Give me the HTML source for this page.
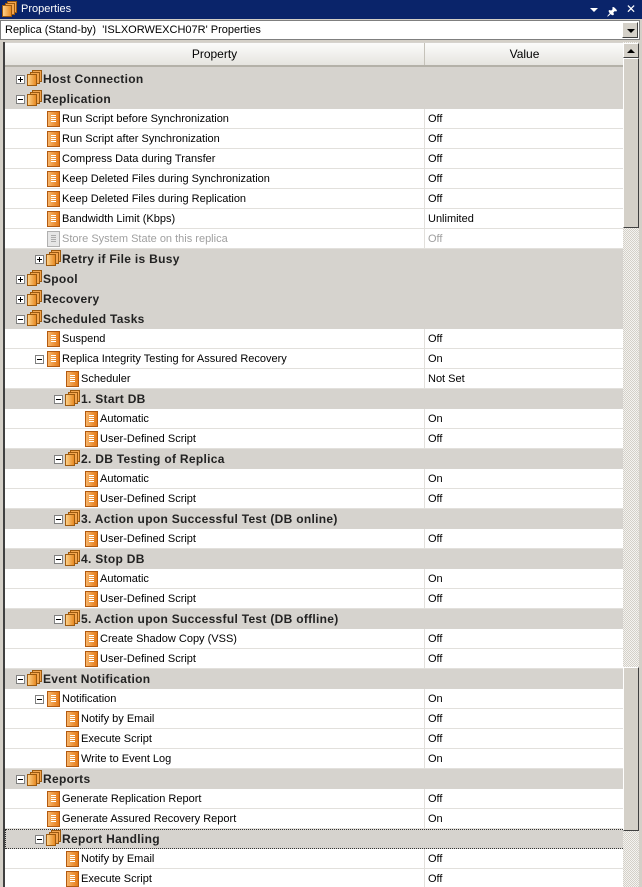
<!DOCTYPE html>
<html><head><meta charset="utf-8"><style>
*{margin:0;padding:0;box-sizing:border-box}
body{width:642px;height:887px;overflow:hidden;background:#d4d0c8;font-family:"Liberation Sans",sans-serif;font-size:11px;color:#000;position:relative}
#title{position:absolute;left:0;top:0;width:642px;height:19px;background:#0a246a;color:#fff;font-size:11px}
#title span{position:absolute;left:21px;top:3px}
#combo{position:absolute;left:0;top:20px;width:640px;height:20px;background:#fff;border:1px solid #7f7f7f}
#combo span{position:absolute;left:4px;top:3px}
#cbtn{position:absolute;right:1px;top:1px;width:16px;height:16px;background:#d4d0c8;border:1px solid #fff;border-right-color:#404040;border-bottom-color:#404040}
.dn{position:absolute;left:4px;top:6px;width:0;height:0;border-left:4px solid transparent;border-right:4px solid transparent;border-top:4px solid #000}
.up{position:absolute;left:3px;top:5px;width:0;height:0;border-left:4px solid transparent;border-right:4px solid transparent;border-bottom:4px solid #000}
#grid{position:absolute;left:3px;top:42px;width:620px;height:845px;border-left:2px solid #404040;overflow:hidden;background:#d6d3ce}
#hdr{position:absolute;left:0;top:1px;width:620px;height:24px;background:linear-gradient(#fcfcfb,#e6e4df);border-bottom:2px solid #b4b1a8}
#hdr div{position:absolute;top:0;height:22px;line-height:22px;text-align:center;font-size:12px;border-right:1px solid #c5c2b9}
.r{position:absolute;left:0;width:620px;height:20px;border-bottom:1px solid #e2e0dc;background:#fff}
.r.c{background:#d6d3ce;border-bottom:none}
.r span{position:absolute;top:4px;white-space:nowrap}
.r.c span{font-weight:bold;font-size:12px;top:3px;letter-spacing:.3px;color:#222}
.r .v{left:419px;border-left:1px solid #e2e0dc;top:0;height:20px;padding:4px 0 0 3px;width:200px}
.g1{color:#a0a0a0}
.e{position:absolute;top:6px;width:9px;height:9px;border:1px solid #808080;background:#fff}
.e:before{content:"";position:absolute;left:1px;top:3px;width:5px;height:1px;background:#000}
.e.p:after{content:"";position:absolute;left:3px;top:1px;width:1px;height:5px;background:#000}
.ic{position:absolute;top:2px;width:13px;height:16px;background:linear-gradient(90deg,#f7b56a,#e47a18);border:1px solid #b35a10}
.ic:after{content:"";position:absolute;left:3px;top:3px;width:5px;height:7px;background:repeating-linear-gradient(#fff 0 1px,transparent 1px 2px)}
.ic.gr{background:#e6e6e6;border-color:#b0b0b0}
.ic.gr:after{background:repeating-linear-gradient(#aaa 0 1px,transparent 1px 2px)}
.gp{position:absolute;top:1px;width:16px;height:17px}
.gp i{position:absolute;width:10px;height:12px;background:#f3a54e;border:1px solid #9c5a10}
.gp i:nth-child(1){left:5px;top:0}
.gp i:nth-child(2){left:2.5px;top:2px}
.gp i:nth-child(3){left:0;top:4px;background:linear-gradient(90deg,#fbd08a,#e88a22)}
.foc{outline:1px dotted #333;outline-offset:-1px}
#sb{position:absolute;left:623px;top:42px;width:16px;height:845px;background:repeating-conic-gradient(#d4d0c8 0 25%,#f4f3f0 0 50%) 0 0/2px 2px}
.btn{position:absolute;left:0;width:16px;background:#d4d0c8;border:1px solid #fff;border-right-color:#404040;border-bottom-color:#404040}
#rb{position:absolute;left:639px;top:42px;width:3px;height:845px;background:#d4d0c8}
#rows{position:absolute;left:0;top:1px;width:620px;height:860px}
</style></head><body>
<div id="title">
<div class="gp" style="left:2px;top:1px"><i></i><i></i><i></i></div>
<span>Properties</span>
<div style="position:absolute;left:590px;top:8px;border-left:4px solid transparent;border-right:4px solid transparent;border-top:4px solid #fff"></div>
<div style="position:absolute;left:607px;top:3px;color:#fff;font-size:11px;font-weight:bold">&#x1F588;</div>
<div style="position:absolute;left:626px;top:2px;color:#fff;font-size:12px">✕</div>
</div>
<div id="combo"><span>Replica (Stand-by)&nbsp; 'ISLXORWEXCH07R' Properties</span><div id="cbtn"><div class="dn"></div></div></div>
<div id="grid">
<div id="hdr"><div style="left:0;width:420px">Property</div><div style="left:420px;width:200px">Value</div></div>
<div id="rows">
<div class="r c" style="top:26px"><i class="e p" style="left:11px"></i><div class="gp" style="left:22px"><i></i><i></i><i></i></div><span style="left:38px">Host Connection</span></div>
<div class="r c" style="top:46px"><i class="e" style="left:11px"></i><div class="gp" style="left:22px"><i></i><i></i><i></i></div><span style="left:38px">Replication</span></div>
<div class="r" style="top:66px"><b class="ic" style="left:42px"></b><span style="left:57px">Run Script before Synchronization</span><span class="v">Off</span></div>
<div class="r" style="top:86px"><b class="ic" style="left:42px"></b><span style="left:57px">Run Script after Synchronization</span><span class="v">Off</span></div>
<div class="r" style="top:106px"><b class="ic" style="left:42px"></b><span style="left:57px">Compress Data during Transfer</span><span class="v">Off</span></div>
<div class="r" style="top:126px"><b class="ic" style="left:42px"></b><span style="left:57px">Keep Deleted Files during Synchronization</span><span class="v">Off</span></div>
<div class="r" style="top:146px"><b class="ic" style="left:42px"></b><span style="left:57px">Keep Deleted Files during Replication</span><span class="v">Off</span></div>
<div class="r" style="top:166px"><b class="ic" style="left:42px"></b><span style="left:57px">Bandwidth Limit (Kbps)</span><span class="v">Unlimited</span></div>
<div class="r" style="top:186px"><b class="ic gr" style="left:42px"></b><span class="g1" style="left:57px">Store System State on this replica</span><span class="v g1">Off</span></div>
<div class="r c" style="top:206px"><i class="e p" style="left:30px"></i><div class="gp" style="left:41px"><i></i><i></i><i></i></div><span style="left:57px">Retry if File is Busy</span></div>
<div class="r c" style="top:226px"><i class="e p" style="left:11px"></i><div class="gp" style="left:22px"><i></i><i></i><i></i></div><span style="left:38px">Spool</span></div>
<div class="r c" style="top:246px"><i class="e p" style="left:11px"></i><div class="gp" style="left:22px"><i></i><i></i><i></i></div><span style="left:38px">Recovery</span></div>
<div class="r c" style="top:266px"><i class="e" style="left:11px"></i><div class="gp" style="left:22px"><i></i><i></i><i></i></div><span style="left:38px">Scheduled Tasks</span></div>
<div class="r" style="top:286px"><b class="ic" style="left:42px"></b><span style="left:57px">Suspend</span><span class="v">Off</span></div>
<div class="r" style="top:306px"><i class="e" style="left:30px"></i><b class="ic" style="left:42px"></b><span style="left:57px">Replica Integrity Testing for Assured Recovery</span><span class="v">On</span></div>
<div class="r" style="top:326px"><b class="ic" style="left:61px"></b><span style="left:76px">Scheduler</span><span class="v">Not Set</span></div>
<div class="r c" style="top:346px"><i class="e" style="left:49px"></i><div class="gp" style="left:60px"><i></i><i></i><i></i></div><span style="left:76px">1. Start DB</span></div>
<div class="r" style="top:366px"><b class="ic" style="left:80px"></b><span style="left:95px">Automatic</span><span class="v">On</span></div>
<div class="r" style="top:386px"><b class="ic" style="left:80px"></b><span style="left:95px">User-Defined Script</span><span class="v">Off</span></div>
<div class="r c" style="top:406px"><i class="e" style="left:49px"></i><div class="gp" style="left:60px"><i></i><i></i><i></i></div><span style="left:76px">2. DB Testing of Replica</span></div>
<div class="r" style="top:426px"><b class="ic" style="left:80px"></b><span style="left:95px">Automatic</span><span class="v">On</span></div>
<div class="r" style="top:446px"><b class="ic" style="left:80px"></b><span style="left:95px">User-Defined Script</span><span class="v">Off</span></div>
<div class="r c" style="top:466px"><i class="e" style="left:49px"></i><div class="gp" style="left:60px"><i></i><i></i><i></i></div><span style="left:76px">3. Action upon Successful Test (DB online)</span></div>
<div class="r" style="top:486px"><b class="ic" style="left:80px"></b><span style="left:95px">User-Defined Script</span><span class="v">Off</span></div>
<div class="r c" style="top:506px"><i class="e" style="left:49px"></i><div class="gp" style="left:60px"><i></i><i></i><i></i></div><span style="left:76px">4. Stop DB</span></div>
<div class="r" style="top:526px"><b class="ic" style="left:80px"></b><span style="left:95px">Automatic</span><span class="v">On</span></div>
<div class="r" style="top:546px"><b class="ic" style="left:80px"></b><span style="left:95px">User-Defined Script</span><span class="v">Off</span></div>
<div class="r c" style="top:566px"><i class="e" style="left:49px"></i><div class="gp" style="left:60px"><i></i><i></i><i></i></div><span style="left:76px">5. Action upon Successful Test (DB offline)</span></div>
<div class="r" style="top:586px"><b class="ic" style="left:80px"></b><span style="left:95px">Create Shadow Copy (VSS)</span><span class="v">Off</span></div>
<div class="r" style="top:606px"><b class="ic" style="left:80px"></b><span style="left:95px">User-Defined Script</span><span class="v">Off</span></div>
<div class="r c" style="top:626px"><i class="e" style="left:11px"></i><div class="gp" style="left:22px"><i></i><i></i><i></i></div><span style="left:38px">Event Notification</span></div>
<div class="r" style="top:646px"><i class="e" style="left:30px"></i><b class="ic" style="left:42px"></b><span style="left:57px">Notification</span><span class="v">On</span></div>
<div class="r" style="top:666px"><b class="ic" style="left:61px"></b><span style="left:76px">Notify by Email</span><span class="v">Off</span></div>
<div class="r" style="top:686px"><b class="ic" style="left:61px"></b><span style="left:76px">Execute Script</span><span class="v">Off</span></div>
<div class="r" style="top:706px"><b class="ic" style="left:61px"></b><span style="left:76px">Write to Event Log</span><span class="v">On</span></div>
<div class="r c" style="top:726px"><i class="e" style="left:11px"></i><div class="gp" style="left:22px"><i></i><i></i><i></i></div><span style="left:38px">Reports</span></div>
<div class="r" style="top:746px"><b class="ic" style="left:42px"></b><span style="left:57px">Generate Replication Report</span><span class="v">Off</span></div>
<div class="r" style="top:766px"><b class="ic" style="left:42px"></b><span style="left:57px">Generate Assured Recovery Report</span><span class="v">On</span></div>
<div class="r c foc" style="top:786px"><i class="e" style="left:30px"></i><div class="gp" style="left:41px"><i></i><i></i><i></i></div><span style="left:57px">Report Handling</span></div>
<div class="r" style="top:806px"><b class="ic" style="left:61px"></b><span style="left:76px">Notify by Email</span><span class="v">Off</span></div>
<div class="r" style="top:826px"><b class="ic" style="left:61px"></b><span style="left:76px">Execute Script</span><span class="v">Off</span></div>
</div>
</div>
<div id="sb">
<div class="btn" style="top:1px;height:15px"><div class="up"></div></div>
<div class="btn" style="top:16px;height:170px"></div>
<div class="btn" style="top:625px;height:164px"></div>
</div>
<div id="rb"></div>
</body></html>
